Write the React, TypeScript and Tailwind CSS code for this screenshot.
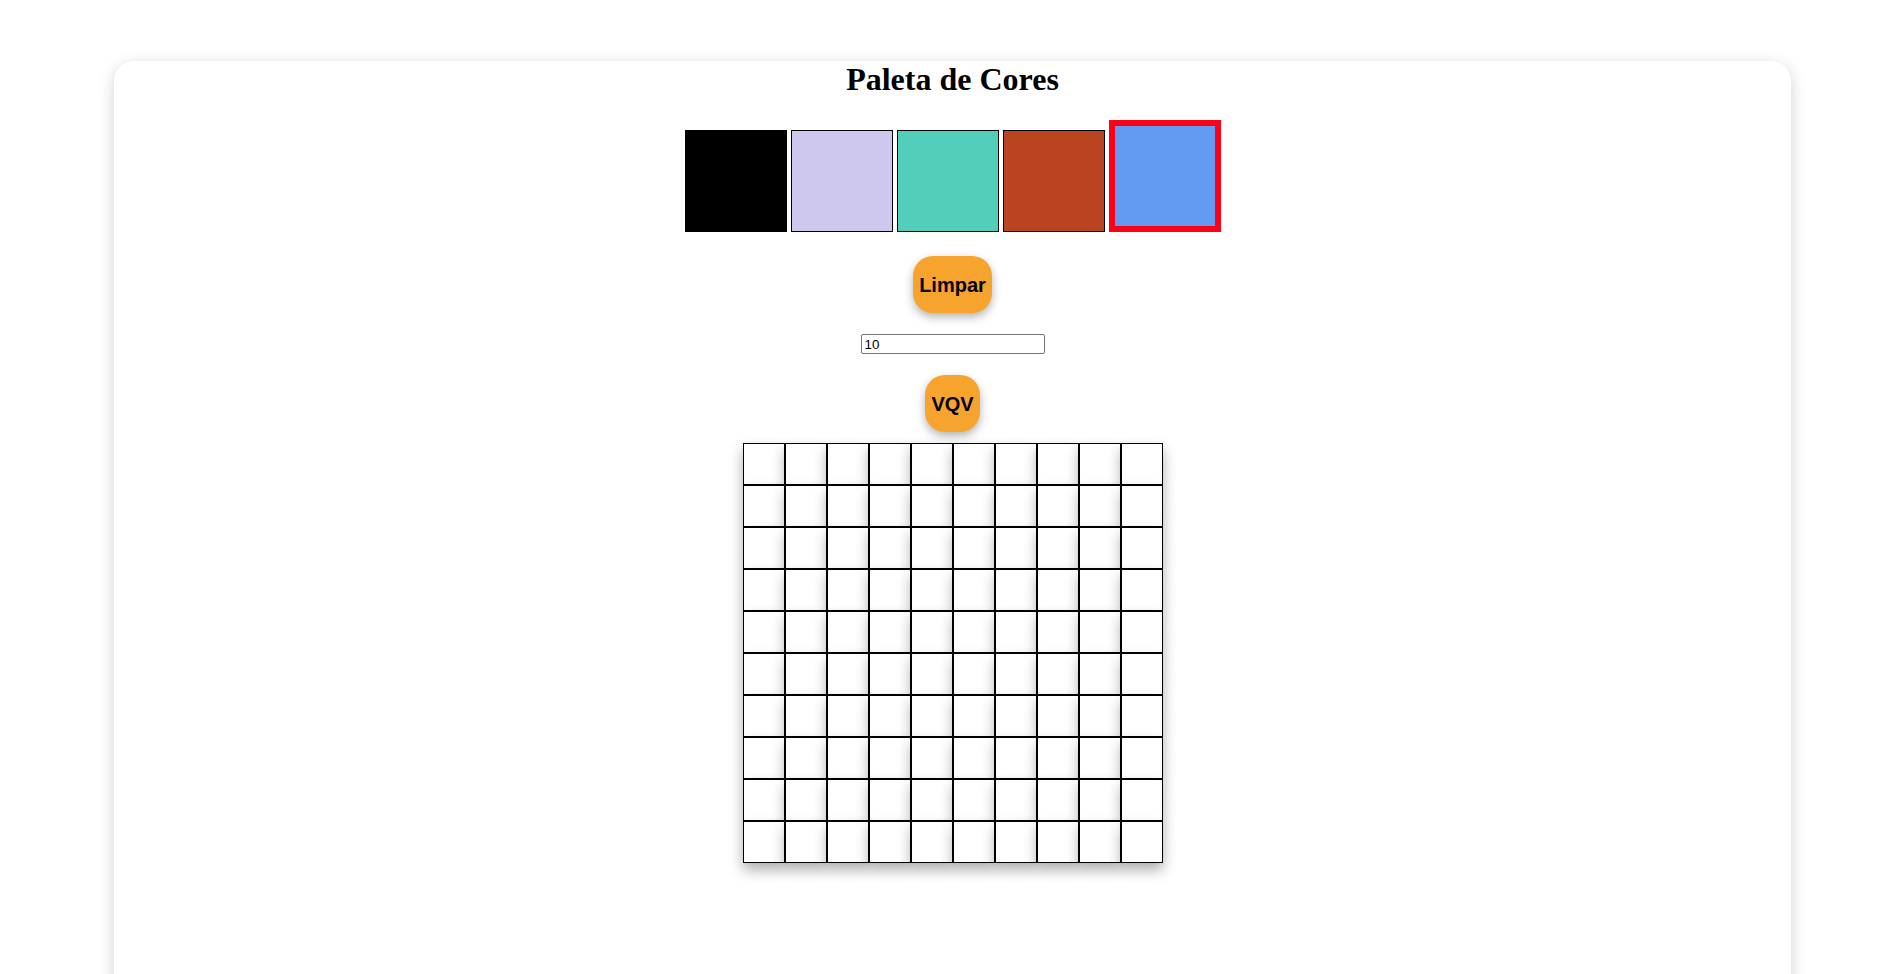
import React from 'react';

const colors = ['#000000', '#cec8ee', '#52ceba', '#ba4420', '#639bf0'];

const App: React.FC = () => {
  const cells = Array.from({ length: 100 }, (_, i) => i);

  return (
    <div className="h-screen overflow-hidden bg-white">
      {/* Card */}
      <div className="ml-[114px] mt-[61px] h-[1000px] w-[1677px] rounded-[20px] bg-white shadow-[0_4px_16px_rgba(0,0,0,0.18)]">
        <div className="flex flex-col items-center">
          <h1 className="mb-[22px] text-[32px] leading-[37px] font-bold text-black [font-family:'Liberation_Serif',serif]">
            Paleta de Cores
          </h1>

          {/* Palette */}
          <div className="flex h-[112px] items-end gap-[4px]">
            {colors.map((c, i) => (
              <div
                key={c}
                className={
                  i === 4
                    ? 'h-[112px] w-[112px] border-[6px] border-[#ff001a]'
                    : 'h-[102px] w-[102px] border border-black'
                }
                style={{ backgroundColor: c }}
              />
            ))}
          </div>

          <button className="mt-[24px] h-[57px] rounded-[20px] bg-[#f7a42e] px-[6px] text-[20px] font-bold text-black shadow-[0_4px_10px_rgba(0,0,0,0.3)] [font-family:'Liberation_Sans',sans-serif]">
            Limpar
          </button>

          <input
            type="number"
            defaultValue="10"
            className="mt-[21px] h-[20px] w-[184px] rounded-[2px] border border-[#767676] px-[3px] text-[13.33px] text-black [font-family:'Liberation_Sans',sans-serif] [appearance:textfield] [&::-webkit-inner-spin-button]:appearance-none"
          />

          <button className="mt-[21px] h-[57px] rounded-[20px] bg-[#f7a42e] px-[6px] text-[20px] font-bold text-black shadow-[0_4px_10px_rgba(0,0,0,0.3)] [font-family:'Liberation_Sans',sans-serif]">
            VQV
          </button>

          {/* Pixel board */}
          <div className="mt-[11px] grid w-[420px] grid-cols-10">
            {cells.map((i) => (
              <div
                key={i}
                className="h-[42px] w-[42px] border border-black bg-white shadow-[0_7px_14px_rgba(0,0,0,0.32)]"
              />
            ))}
          </div>
        </div>
      </div>
    </div>
  );
};

export default App;
